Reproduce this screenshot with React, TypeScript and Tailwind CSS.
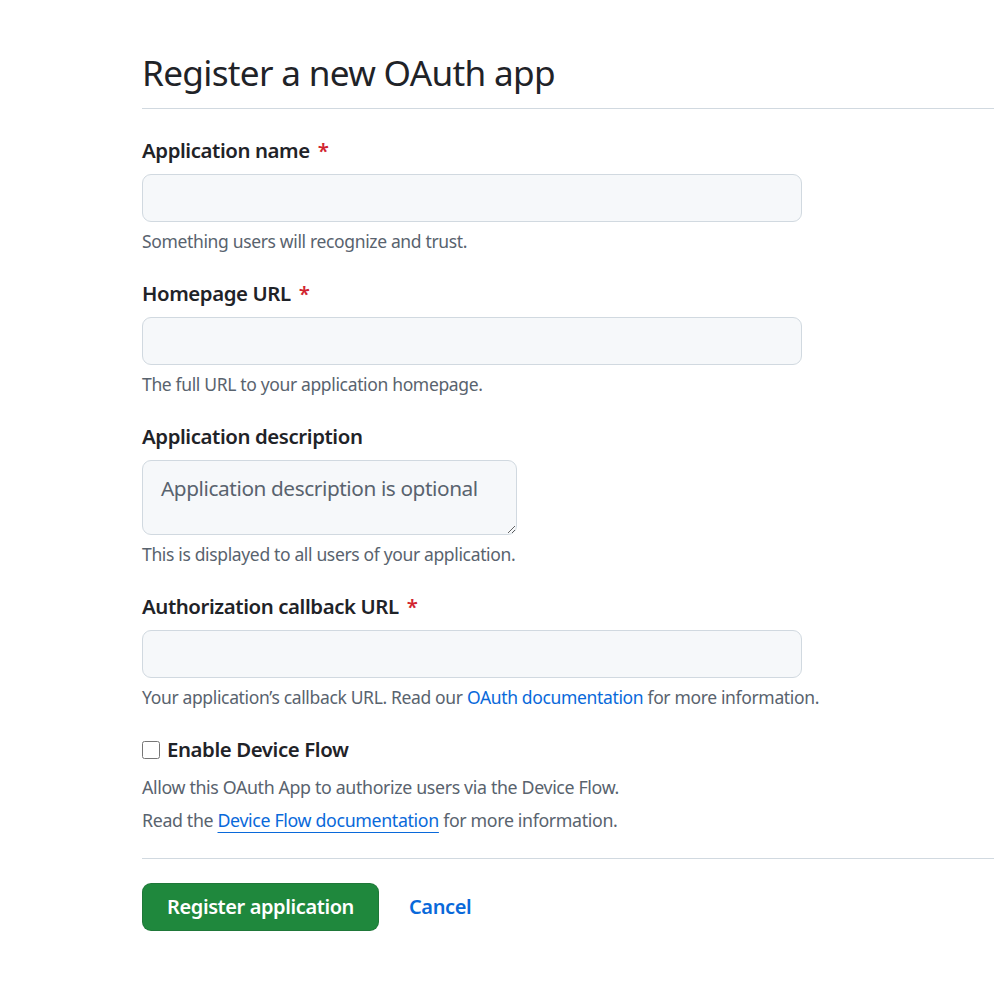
import React from 'react'

const font = { fontFamily: '"Noto Sans", "Liberation Sans", sans-serif' }

function Label({ text, required }: { text: string; required?: boolean }) {
  return (
    <label className="block text-[20.4px] leading-[31px] font-semibold tracking-[-0.02em] text-[#1f2328]">
      {text}
      {required && <span className="ml-[8px] text-[#d1242f]">*</span>}
    </label>
  )
}

function Note({ children }: { children: React.ReactNode }) {
  return <p className="mt-[6px] text-[17.5px] leading-[27px] tracking-[-0.02em] text-[#59636e]">{children}</p>
}

function TextField() {
  return (
    <input
      type="text"
      className="mt-[8px] block w-[660px] h-[48px] rounded-[9px] border border-[#d1d9e0] bg-[#f6f8fa] px-[18px] text-[20px] outline-none"
    />
  )
}

export default function App() {
  return (
    <div className="min-h-[1002px] bg-white pl-[142px] pt-[50px] overflow-hidden" style={font}>
      <div className="border-b border-[#d1d9e0] pb-[13px]">
        <h2 className="text-[35.2px] leading-[45px] font-normal tracking-[-0.02em] text-[#1f2328]">
          Register a new OAuth app
        </h2>
      </div>

      <form className="pt-[26px]">
        <div>
          <Label text="Application name" required />
          <TextField />
          <Note>Something users will recognize and trust.</Note>
        </div>

        <div className="mt-[23px]">
          <Label text="Homepage URL" required />
          <TextField />
          <Note>The full URL to your application homepage.</Note>
        </div>

        <div className="mt-[23px]">
          <Label text="Application description" />
          <textarea
            placeholder="Application description is optional"
            className="mt-[8px] block w-[375px] h-[75px] rounded-[9px] border border-[#d1d9e0] bg-[#f6f8fa] px-[18px] py-[12px] text-[20.8px] leading-[31px] tracking-[-0.02em] text-[#1f2328] placeholder:text-[#59636e] outline-none"
          />
          <Note>This is displayed to all users of your application.</Note>
        </div>

        <div className="mt-[23px]">
          <Label text="Authorization callback URL" required />
          <TextField />
          <Note>
            Your application’s callback URL. Read our{' '}
            <a href="#" className="text-[#0969da]">OAuth documentation</a> for more information.
          </Note>
        </div>

        <div className="mt-[23px]">
          <label className="flex items-center gap-[7px] text-[20.4px] leading-[31px] font-semibold tracking-[-0.02em] text-[#1f2328]">
            <input type="checkbox" className="w-[18px] h-[18px] m-0" />
            Enable Device Flow
          </label>
          <p className="mt-[6px] text-[17.8px] leading-[33px] tracking-[-0.02em] text-[#59636e]">
            Allow this OAuth App to authorize users via the Device Flow.
          </p>
          <p className="text-[17.8px] leading-[33px] tracking-[-0.02em] text-[#59636e]">
            Read the{' '}
            <a href="#" className="text-[#0969da] underline underline-offset-[5px]">Device Flow documentation</a>{' '}
            for more information.
          </p>
        </div>

        <div className="mt-[21px] border-t border-[#d1d9e0] pt-[24px] flex items-center gap-[30px]">
          <button
            type="button"
            className="h-[48px] px-[24px] rounded-[9px] bg-[#1f883d] border border-[rgba(31,35,40,0.15)] text-white text-[20px] font-semibold tracking-[-0.02em]"
          >
            Register application
          </button>
          <a href="#" className="text-[#0969da] text-[20px] font-semibold tracking-[-0.02em]">Cancel</a>
        </div>
      </form>
    </div>
  )
}
